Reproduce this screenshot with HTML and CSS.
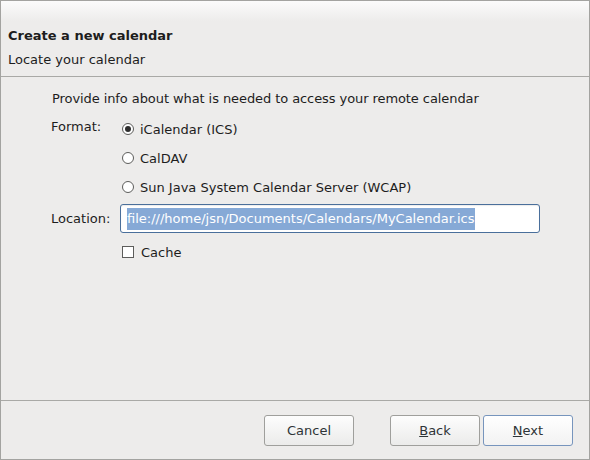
FILE: index.html
```html
<!DOCTYPE html>
<html lang="en">
<head>
    <meta charset="UTF-8">
    <title>Create a new calendar</title>
    <link rel="stylesheet" href="styles.css">
</head>
<body>
    <div class="dialog">
        <div class="header">
            <div class="title">Create a new calendar</div>
            <div class="subtitle">Locate your calendar</div>
        </div>
        <div class="content">
            <div class="intro">Provide info about what is needed to access your remote calendar</div>
            <div class="row">
                <div class="label">Format:</div>
                <div class="options">
                    <div class="option"><span class="radio checked"></span>iCalendar (ICS)</div>
                    <div class="option"><span class="radio"></span>CalDAV</div>
                    <div class="option"><span class="radio"></span>Sun Java System Calendar Server (WCAP)</div>
                </div>
            </div>
            <div class="row location-row">
                <div class="label">Location:</div>
                <div class="field"><span class="selected">file:///home/jsn/Documents/Calendars/MyCalendar.ics</span></div>
            </div>
            <div class="row">
                <div class="label"></div>
                <div class="option"><span class="check"></span>Cache</div>
            </div>
        </div>
        <div class="footer">
            <button class="btn cancel">Cancel</button>
            <button class="btn"><u>B</u>ack</button>
            <button class="btn default"><u>N</u>ext</button>
        </div>
    </div>
</body>
</html>
```

FILE: styles.css
```css
html, body {
    margin: 0;
    padding: 0;
}
body {
    font-family: "DejaVu Sans", sans-serif;
    font-size: 13px;
    color: #2e3436;
    background: #edeceb;
}
.dialog {
    width: 590px;
    height: 460px;
    box-sizing: border-box;
    border: 1px solid #a3a3a0;
    display: flex;
    flex-direction: column;
    background: #edeceb;
}
.header {
    height: 76px;
    box-sizing: border-box;
    padding: 27px 7px 0 7px;
    border-bottom: 1px solid #a9a9a6;
    background: linear-gradient(#fbfbfb 0px, #edeceb 20px);
}
.title {
    font-weight: bold;
    color: #1d1d1d;
    height: 20px;
}
.subtitle {
    color: #1d1d1d;
    margin-top: 4px;
}
.content {
    flex: 1;
    padding: 14px 0 0 50px;
    color: #1d1d1d;
}
.intro {
    height: 20px;
    margin-left: 1px;
    letter-spacing: -0.08px;
}
.row {
    display: flex;
    margin-top: 8px;
}
.label {
    width: 70px;
}
.options {
    display: flex;
    flex-direction: column;
    gap: 9px;
}
.option {
    display: flex;
    align-items: center;
    height: 20px;
}
.radio {
    width: 10px;
    height: 10px;
    border: 1px solid #5d5d5b;
    border-radius: 50%;
    background: #fff;
    margin: 0 6px 0 1px;
    position: relative;
}
.radio.checked::after {
    content: "";
    position: absolute;
    left: 2px;
    top: 2px;
    width: 6px;
    height: 6px;
    border-radius: 50%;
    background: #2e2e2e;
}
.check {
    width: 10px;
    height: 10px;
    border: 1px solid #5d5d5b;
    background: #fff;
    margin: 0 7px 0 1px;
}
.location-row {
    align-items: center;
    margin-top: 7px;
}
.location-row .label {
    width: 69px;
}
.field {
    width: 420px;
    height: 29px;
    box-sizing: border-box;
    border: 1px solid #4a6f9b;
    border-radius: 3px;
    background: #fff;
    padding: 2px 6px;
    display: flex;
    align-items: center;
    box-shadow: inset 0 1px 1px rgba(0,0,0,0.08);
}
.selected {
    background: #86a9d6;
    color: #fff;
    height: 22px;
    line-height: 22px;
}
.location-row + .row {
    margin-top: 9px;
}
.footer {
    height: 58px;
    border-top: 1px solid #a9a9a6;
    display: flex;
    justify-content: flex-end;
    align-items: center;
    padding: 0 16px 0 0;
}
.btn {
    font-family: "DejaVu Sans", sans-serif;
    font-size: 13px;
    color: #2e3436;
    width: 90px;
    height: 31px;
    border: 1px solid #9f9f9c;
    border-radius: 3px;
    background: linear-gradient(#fdfdfd, #ebebea);
    margin-left: 3px;
}
.btn.cancel {
    margin-right: 33px;
}
.btn.default {
    border-color: #7795bd;
    background: linear-gradient(#ffffff, #f2f2f2);
}
```
